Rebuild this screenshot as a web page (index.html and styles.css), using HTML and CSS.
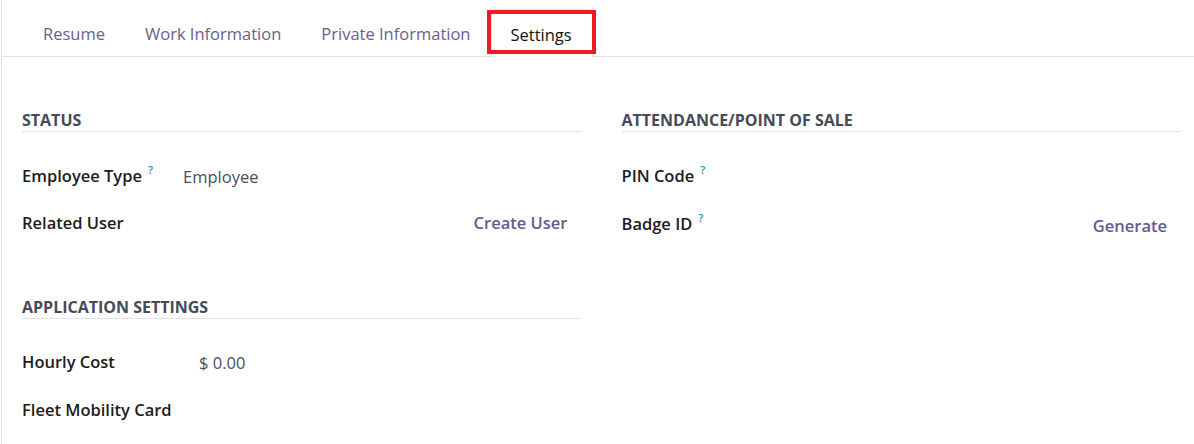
FILE: index.html
```html
<!DOCTYPE html>
<html lang="en">
<head>
    <meta charset="UTF-8">
    <title>Employee - Settings</title>
    <link rel="stylesheet" href="styles.css">
</head>
<body>
    <div class="sheet">
        <ul class="tabs">
            <li class="tab">Resume</li>
            <li class="tab">Work Information</li>
            <li class="tab">Private Information</li>
            <li class="tab active">Settings<span class="highlight"></span></li>
        </ul>
        <div class="tab-content">
            <div class="group-col">
                <div class="section">
                    <div class="section-title">Status</div>
                    <div class="field-row">
                        <div class="label">Employee Type<sup class="help">?</sup></div>
                        <div class="value value-shift">Employee</div>
                    </div>
                    <div class="field-row">
                        <div class="label">Related User</div>
                        <div class="value value-right"><span class="btn-link">Create User</span></div>
                    </div>
                </div>
                <div class="section">
                    <div class="section-title">Application Settings</div>
                    <div class="field-row">
                        <div class="label">Hourly Cost</div>
                        <div class="value money">$ 0.00</div>
                    </div>
                    <div class="field-row">
                        <div class="label">Fleet Mobility Card</div>
                        <div class="value"></div>
                    </div>
                </div>
            </div>
            <div class="group-col">
                <div class="section">
                    <div class="section-title">Attendance/Point of Sale</div>
                    <div class="field-row">
                        <div class="label">PIN Code<sup class="help">?</sup></div>
                        <div class="value"></div>
                    </div>
                    <div class="field-row">
                        <div class="label">Badge ID<sup class="help">?</sup></div>
                        <div class="value value-right"><span class="btn-link btn-low">Generate</span></div>
                    </div>
                </div>
            </div>
        </div>
    </div>
</body>
</html>
```

FILE: styles.css
```css
body {
    font-family: 'Open Sans', 'Noto Sans', Arial, sans-serif;
    margin: 0;
    background: #fff;
    color: #212529;
    overflow: hidden;
}
.sheet {
    margin-left: 1px;
    border-left: 1px solid #e2e2ea;
    min-height: 100vh;
}
.tabs {
    display: flex;
    list-style: none;
    margin: 0;
    padding: 9px 0 0 21px;
    border-bottom: 1px solid #dee2e6;
    height: 47px;
}
.tab {
    display: flex;
    align-items: center;
    padding: 0 19px;
    border: 1px solid transparent;
    border-bottom: none;
    border-radius: 4px 4px 0 0;
    font-size: 16.5px;
    color: #6a5f8c;
    margin-bottom: -1px;
    position: relative;
}
.tab.active {
    color: #111;
    background: #fff;
    border-color: #dee2e6;
    height: 48px;
    padding: 0 20px 0 19px;
}
.highlight {
    position: absolute;
    left: -5px;
    right: -4px;
    top: 0;
    height: 44px;
    border: 4px solid #ed1c24;
    box-sizing: border-box;
}
.tab-content {
    display: grid;
    grid-template-columns: 1fr 1fr;
    gap: 41px;
    padding: 53px 14px 0 20px;
}
.section + .section {
    margin-top: 51px;
}
.section-title {
    font-size: 16px;
    line-height: 20px;
    font-weight: 700;
    text-transform: uppercase;
    color: #454b55;
    padding-bottom: 1px;
    border-bottom: 1px solid #dee2e6;
    margin-bottom: 18px;
}
.field-row {
    display: flex;
    align-items: center;
    height: 48px;
}
.label {
    width: 161px;
    flex-shrink: 0;
    font-size: 16.5px;
    font-weight: 600;
    color: #1c1c1c;
}
.help {
    color: #1b8db5;
    font-size: 11px;
    margin-left: 6px;
    vertical-align: 8px;
    font-weight: 600;
}
.value {
    flex: 1;
    font-size: 16.5px;
    color: #4a4f57;
}
.value-shift {
    padding-top: 4px;
}
.money {
    padding-left: 16px;
    padding-top: 2px;
}
.value-right {
    text-align: right;
    padding-right: 13px;
}
.btn-link {
    color: #66598f;
    font-weight: 600;
}
.btn-low {
    position: relative;
    top: 3px;
}
```
